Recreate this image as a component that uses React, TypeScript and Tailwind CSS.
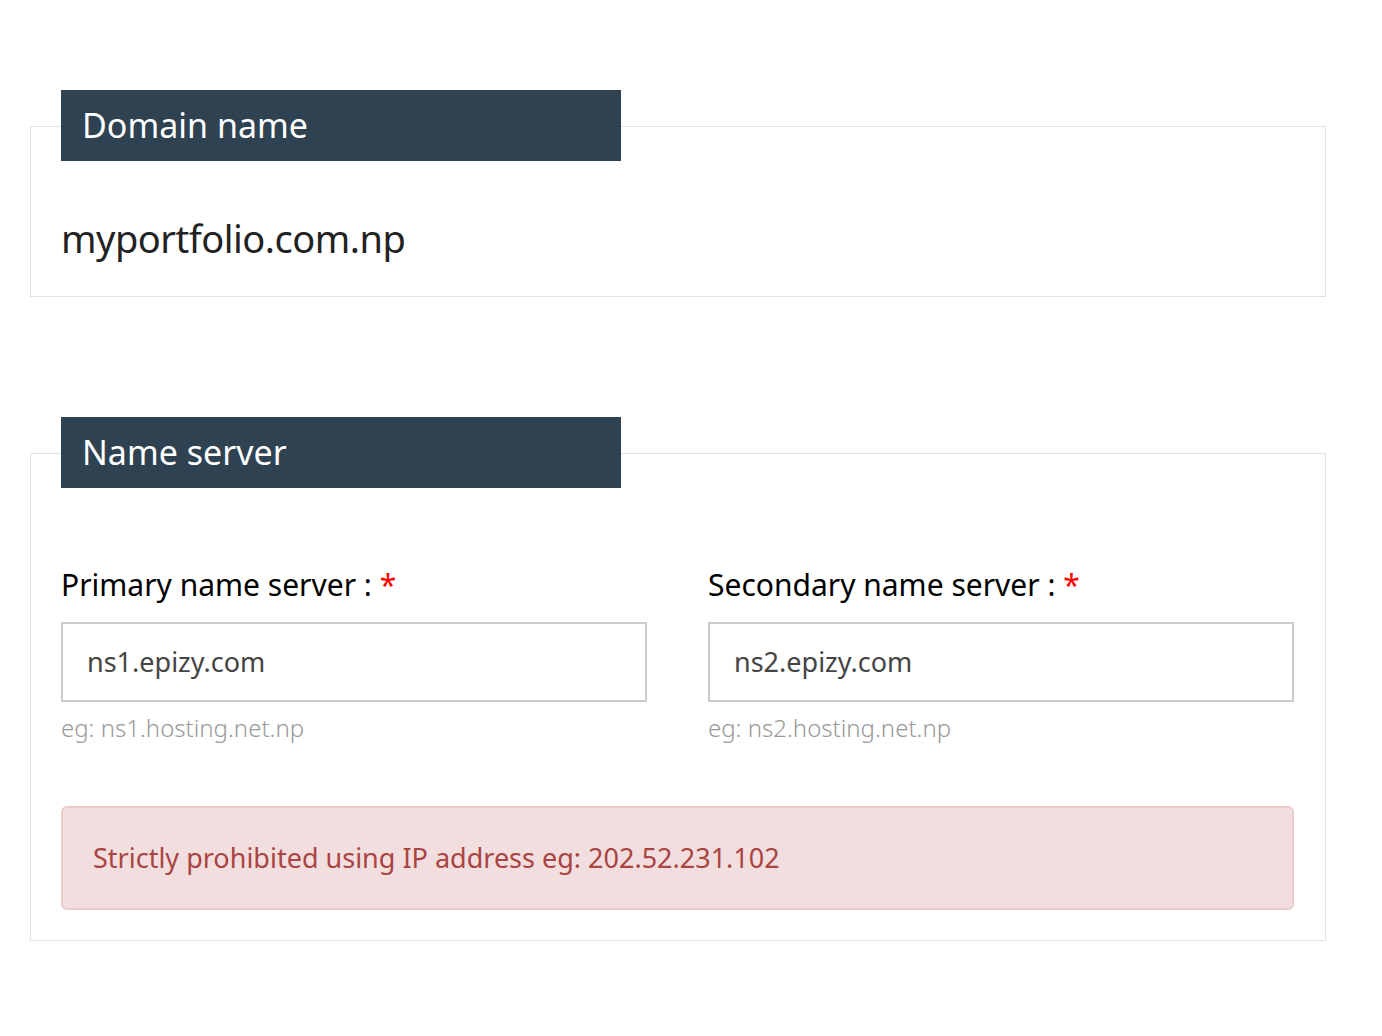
export default function App() {
    return (
        <div className="min-h-[1036px] bg-white pt-[126px] pl-[30px] font-['Roboto',sans-serif]">
            {/* Domain name */}
            <div className="w-[1296px] border border-[#dbe4ec] pl-[30px] pr-[31px] pb-[36px]">
                <div className="-mt-[37px] flex h-[71px] w-[560px] items-center bg-[#2f4252] px-[21px] text-[34px] text-white">
                    Domain name
                </div>
                <div className="mt-[55px] text-[38px] leading-[44px] tracking-[-0.5px] text-[#222]">myportfolio.com.np</div>
            </div>

            {/* Name server */}
            <div className="mt-[156px] w-[1296px] border border-[#dbe4ec] pl-[30px] pr-[31px] pb-[30px]">
                <div className="-mt-[37px] flex h-[71px] w-[560px] items-center bg-[#2f4252] px-[21px] text-[34px] text-white">
                    Name server
                </div>
                <div className="mt-[79px] grid grid-cols-2 gap-[61px]">
                    {[
                        ['Primary name server :', 'ns1.epizy.com', 'eg: ns1.hosting.net.np'],
                        ['Secondary name server :', 'ns2.epizy.com', 'eg: ns2.hosting.net.np'],
                    ].map(([label, value, hint]) => (
                        <div key={label}>
                            <div className="text-[30px] leading-[36px] text-black">
                                {label} <span className="text-[#ff0000]">*</span>
                            </div>
                            <div className="mt-[19px] flex h-[80px] items-center border-2 border-[#cccccc] px-[24px] text-[27px] text-[#444]">
                                {value}
                            </div>
                            <div className="mt-[12px] text-[24px] font-light leading-[28px] text-[#999]">{hint}</div>
                        </div>
                    ))}
                </div>
                <div className="mt-[64px] flex h-[104px] items-center rounded-[6px] border-2 border-[#ebcccc] bg-[#f2dede] px-[30px] text-[27px] text-[#a94442]">
                    Strictly prohibited using IP address eg: 202.52.231.102
                </div>
            </div>
        </div>
    )
}
